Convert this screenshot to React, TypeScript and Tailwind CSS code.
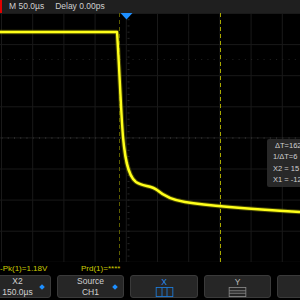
import React from "react";

const font = { fontFamily: '"Liberation Sans", Arial, sans-serif' };

function Grid() {
  const vx: number[] = [];
  for (let i = 0; i < 10; i++) vx.push(1.5 + i * 31.2);
  const hy: number[] = [];
  for (let i = 0; i <= 8; i++) hy.push(i * 31.1);
  const ticksX: number[] = [];
  for (let x = 1.5; x < 300; x += 6.24) ticksX.push(x);
  const ticksY: number[] = [];
  for (let y = 0; y < 249; y += 6.22) ticksY.push(y);
  const trace =
    "M0,19 L117,19 C118.5,40 120.5,85 122,110 C124,145 128,163 136,169 C143,174 151,172 157,177 C164,183 172,187 185,189 C210,193 250,196 300,199";
  return (
    <svg width="300" height="249" viewBox="0 0 300 249" className="block">
      <rect width="300" height="249" fill="#000" />
      {vx.map((x) => (
        <line key={"v" + x} x1={x} y1={0} x2={x} y2={249} stroke="#191919" strokeWidth="1" />
      ))}
      {hy.map((y) => (
        <line key={"h" + y} x1={0} y1={y + 0.5} x2={300} y2={y + 0.5} stroke="#191919" strokeWidth="1" />
      ))}
      {ticksX.map((x) => (
        <rect key={"tx" + x} x={x} y={124} width="1" height="2" fill="#2a2a2a" />
      ))}
      {ticksY.map((y) => (
        <rect key={"ty" + y} x={127.5} y={y} width="2" height="1" fill="#262626" />
      ))}
      {ticksX.map((x) => (
        <rect key={"tl" + x} x={x} y={46} width="1" height="1" fill="#242424" />
      ))}
      <line x1="119.5" y1="0" x2="119.5" y2="249" stroke="#5c5c00" strokeWidth="1" strokeDasharray="4 3" />
      <line x1="220.5" y1="0" x2="220.5" y2="249" stroke="#a8a800" strokeWidth="1" strokeDasharray="4 3" />
      <path d={trace} fill="none" stroke="#7a7a00" strokeWidth="4.5" strokeOpacity="0.55" strokeLinejoin="round" />
      <path d={trace} fill="none" stroke="#ffff1a" strokeWidth="2.4" strokeLinejoin="round" />
      <polygon points="120.5,0 132.5,0 126.5,6.5" fill="#1e8fff" />
    </svg>
  );
}

function Diamond() {
  return <span className="absolute right-[6px] top-[9px] w-[4px] h-[4px] rotate-45 bg-[#1e8fff]" />;
}

export default function App() {
  return (
    <div className="w-[300px] h-[300px] bg-black flex flex-col overflow-hidden" style={font}>
      <div className="h-[13px] bg-[#1f1f1f] flex items-center text-[8.5px] text-[#cfcfcf] leading-none whitespace-nowrap">
        <div className="w-[2px] h-[13px] bg-[#e00000]" />
        <span className="ml-[7px]">M 50.0µs</span>
        <span className="ml-[11px]">Delay 0.00ps</span>
      </div>
      <div className="relative h-[249px]">
        <Grid />
        <div className="absolute left-[267px] top-[126px] w-[40px] h-[48px] bg-[#2c2c2c]/90 rounded-[2px] text-[7.5px] text-[#d0d0d0] leading-[11.3px] pt-[1px] pl-[6px] whitespace-nowrap">
          <div className="pl-[2px]">ΔT=162</div>
          <div>1/ΔT=6</div>
          <div>X2 = 15</div>
          <div>X1 = -12</div>
        </div>
      </div>
      <div className="h-[13px] flex items-center text-[8px] text-[#cccc00] leading-none whitespace-nowrap">
        <span className="w-[81px]">-Pk(1)=1.18V</span>
        <span>Prd(1)=****</span>
      </div>
      <div className="h-[23px] flex gap-[6px] ml-[-16px] text-[8.5px] text-[#d0d0d0] leading-[11px]">
        <div className="relative w-[67px] shrink-0 bg-[#262626] border border-[#3a3a3a] rounded-[3px] flex flex-col items-center justify-center">
          <span>X2</span>
          <span>150.0µs</span>
          <Diamond />
        </div>
        <div className="relative w-[67px] shrink-0 bg-[#262626] border border-[#3a3a3a] rounded-[3px] flex flex-col items-center justify-center">
          <span>Source</span>
          <span>CH1</span>
          <Diamond />
        </div>
        <div className="relative w-[68px] shrink-0 bg-[#262626] border border-[#3a3a3a] rounded-[3px] flex flex-col items-center justify-start pt-[1px]">
          <span className="text-[#2a8cf0] leading-[10px]">X</span>
          <svg width="21" height="12" viewBox="0 0 21 12">
            <rect x="0.5" y="0.5" width="20" height="11" fill="none" stroke="#1e7fe0" strokeWidth="1" />
            <line x1="7.5" y1="0.5" x2="7.5" y2="11.5" stroke="#1e7fe0" />
            <line x1="13.5" y1="0.5" x2="13.5" y2="11.5" stroke="#1e7fe0" />
          </svg>
        </div>
        <div className="relative w-[67px] shrink-0 bg-[#262626] border border-[#3a3a3a] rounded-[3px] flex flex-col items-center justify-start pt-[1px]">
          <span className="text-[#bdbdbd] leading-[10px]">Y</span>
          <svg width="21" height="12" viewBox="0 0 21 12">
            <rect x="0.5" y="0.5" width="20" height="11" fill="none" stroke="#8a8a8a" strokeWidth="1" />
            <line x1="0.5" y1="4.5" x2="20.5" y2="4.5" stroke="#8a8a8a" />
            <line x1="0.5" y1="7.5" x2="20.5" y2="7.5" stroke="#8a8a8a" />
          </svg>
        </div>
        <div className="relative w-[67px] shrink-0 bg-[#262626] border border-[#3a3a3a] rounded-[3px]" />
      </div>
    </div>
  );
}
